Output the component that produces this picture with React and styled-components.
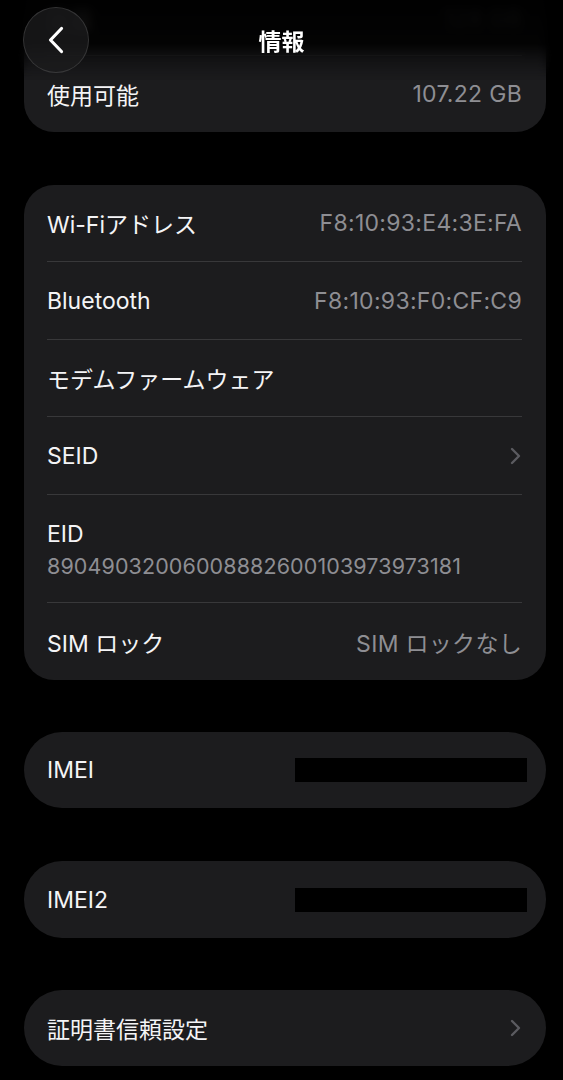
import styled, { createGlobalStyle } from "styled-components";

const GlobalStyle = createGlobalStyle`
  html, body {
    margin: 0;
    padding: 0;
    background: #000;
  }
  body {
    font-family: Inter, "Noto Sans CJK JP", sans-serif;
    -webkit-font-smoothing: antialiased;
  }
`;

const Page = styled.div`
  position: relative;
  width: 563px;
  height: 1080px;
  overflow: hidden;
  background: #000;
`;

const Content = styled.div`
  display: flex;
  flex-direction: column;
  gap: 52px;
  padding: 0 17px 0 24px;
  margin-top: -22px;
`;

const Card = styled.div`
  background: #1c1c1e;
  border-radius: ${(p) => (p.pill ? "38px" : "30px")};
  padding: 0 24px 0 23px;
  margin-top: ${(p) => p.mt || 0}px;
`;

const Row = styled.div`
  display: flex;
  align-items: center;
  justify-content: space-between;
  height: ${(p) => p.h || 77}px;
  border-top: ${(p) => (p.first ? "none" : "1px solid #38383a")};
  box-sizing: border-box;
`;

const StackRow = styled.div`
  display: flex;
  flex-direction: column;
  justify-content: center;
  gap: 5px;
  height: 108px;
  box-sizing: border-box;
  padding-top: 2px;
  border-top: 1px solid #38383a;
`;

const Label = styled.span`
  color: #f4f4f6;
  font-size: 23px;
`;

const Value = styled.span`
  color: #8e8e93;
  font-size: 23px;
  letter-spacing: 0.3px;
`;

const SubValue = styled.span`
  color: #8e8e93;
  font-size: 21.5px;
  letter-spacing: 0.1px;
`;

const Redacted = styled.div`
  width: 232px;
  height: 24px;
  background: #000;
  margin-right: -5px;
`;

const Chevron = styled.svg`
  width: 11px;
  height: 18px;
  margin-right: 1px;
`;

const Fade = styled.div`
  position: absolute;
  left: 0;
  top: 0;
  right: 0;
  height: 80px;
  backdrop-filter: blur(4px);
  mask-image: linear-gradient(to bottom, #000 55%, transparent 100%);
  -webkit-mask-image: linear-gradient(to bottom, #000 55%, transparent 100%);
  background: linear-gradient(
    to bottom,
    rgba(0, 0, 0, 0.96) 0%,
    rgba(0, 0, 0, 0.88) 55%,
    rgba(0, 0, 0, 0.3) 100%
  );
  pointer-events: none;
`;

const Header = styled.div`
  position: absolute;
  left: 0;
  top: 0;
  right: 0;
  height: 81px;
  display: flex;
  align-items: center;
  justify-content: center;
`;

const BackButton = styled.div`
  position: absolute;
  left: 23px;
  top: 7px;
  width: 64px;
  height: 64px;
  border-radius: 50%;
  background: rgba(28, 28, 30, 0.75);
  border: 1px solid rgba(255, 255, 255, 0.13);
  display: flex;
  align-items: center;
  justify-content: center;
`;

const Title = styled.h1`
  margin: 0;
  margin-top: -1px;
  color: #fff;
  font-size: 23px;
  font-weight: 700;
`;

const ChevronRight = () => (
  <Chevron viewBox="0 0 11 18">
    <path
      d="M2 2l7 7-7 7"
      fill="none"
      stroke="#5b5b60"
      strokeWidth="2.4"
      strokeLinecap="round"
      strokeLinejoin="round"
    />
  </Chevron>
);

const App = () => {
  return (
    <Page>
      <GlobalStyle />
      <Content>
        <Card>
          <Row first>
            <Label>容量</Label>
            <Value>128 GB</Value>
          </Row>
          <Row>
            <Label>使用可能</Label>
            <Value>107.22 GB</Value>
          </Row>
        </Card>

        <Card mt={1}>
          <Row first h={76}>
            <Label>Wi-Fiアドレス</Label>
            <Value>F8:10:93:E4:3E:FA</Value>
          </Row>
          <Row h={78}>
            <Label>Bluetooth</Label>
            <Value>F8:10:93:F0:CF:C9</Value>
          </Row>
          <Row>
            <Label>モデムファームウェア</Label>
          </Row>
          <Row h={78}>
            <Label>SEID</Label>
            <ChevronRight />
          </Row>
          <StackRow>
            <Label>EID</Label>
            <SubValue>89049032006008882600103973973181</SubValue>
          </StackRow>
          <Row h={78}>
            <Label>SIM ロック</Label>
            <Value>SIM ロックなし</Value>
          </Row>
        </Card>

        <Card pill>
          <Row first h={76}>
            <Label>IMEI</Label>
            <Redacted />
          </Row>
        </Card>

        <Card pill mt={1}>
          <Row first h={77}>
            <Label>IMEI2</Label>
            <Redacted />
          </Row>
        </Card>

        <Card pill>
          <Row first h={76}>
            <Label>証明書信頼設定</Label>
            <ChevronRight />
          </Row>
        </Card>
      </Content>

      <Fade />
      <Header>
        <BackButton>
          <svg width="18" height="28" viewBox="0 0 18 28">
            <path
              d="M14.5 2.5L3.5 14l11 11.5"
              fill="none"
              stroke="#fff"
              strokeWidth="3.2"
              strokeLinecap="round"
              strokeLinejoin="round"
            />
          </svg>
        </BackButton>
        <Title>情報</Title>
      </Header>
    </Page>
  );
};

export default App;
